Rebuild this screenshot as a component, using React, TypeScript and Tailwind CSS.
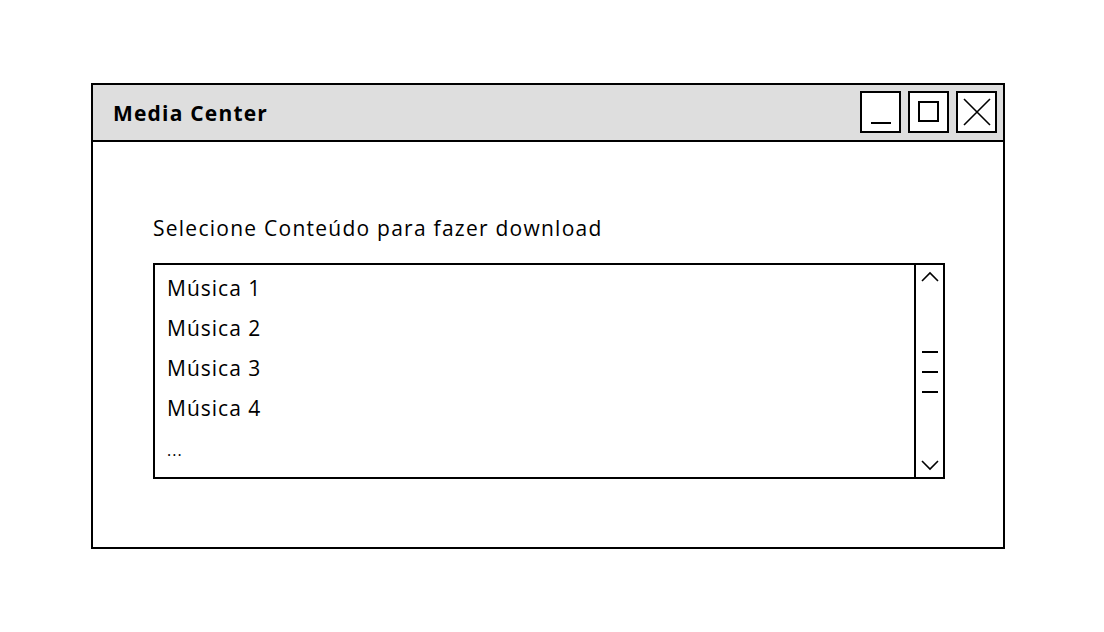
import React from "react";

const font = { fontFamily: '"Open Sans", "Noto Sans", sans-serif' };

export default function App() {
  const items = ["Música 1", "Música 2", "Música 3", "Música 4"];
  return (
    <div className="w-[1104px] h-[632px] bg-white relative" style={font}>
      <div className="pt-[83px] pl-[91px]">
        <div className="w-[914px] h-[466px] border-2 border-black flex flex-col bg-white">
          <div className="h-[57px] bg-[#dedede] border-b-2 border-black flex items-center justify-between pl-[20px] pr-[6px]">
            <span className="text-[21px] font-bold text-black tracking-[1.2px] mt-[2px]">Media Center</span>
            <div className="flex gap-[7px] mt-[-2px]">
              <div className="w-[41px] h-[42px] border-2 border-black bg-white flex items-end justify-center pb-[7px]">
                <div className="w-[20px] h-[2px] bg-black" />
              </div>
              <div className="w-[41px] h-[42px] border-2 border-black bg-white flex items-center justify-center">
                <div className="w-[21px] h-[21px] border-2 border-black" />
              </div>
              <div className="w-[41px] h-[42px] border-2 border-black bg-white flex items-center justify-center">
                <svg width="30" height="30" viewBox="0 0 30 30">
                  <path d="M2 2 L28 28 M28 2 L2 28" stroke="black" strokeWidth="1.6" fill="none" />
                </svg>
              </div>
            </div>
          </div>
          <div className="pl-[60px] pt-[72px]">
            <div className="text-[21px] text-black leading-[28px] tracking-[1.25px]">Selecione Conteúdo para fazer download</div>
            <div className="mt-[21px] w-[792px] h-[216px] border-2 border-black flex">
              <div className="flex-1 pl-[12px] pt-[8px]">
                {items.map((t) => (
                  <div key={t} className="h-[40px] text-[21px] leading-[30px] text-black tracking-[1px]">{t}</div>
                ))}
                <div className="text-[16px] leading-[20px] text-black mt-[7px] tracking-[1px]">...</div>
              </div>
              <div className="w-[29px] border-l-2 border-black flex flex-col items-center justify-between py-[6px]">
                <svg width="18" height="12" viewBox="0 0 18 12">
                  <path d="M1 10 L9 2 L17 10" stroke="black" strokeWidth="1.6" fill="none" />
                </svg>
                <div className="flex flex-col gap-[18px] mt-[68px]">
                  <div className="w-[16px] h-[2px] bg-black" />
                  <div className="w-[16px] h-[2px] bg-black" />
                  <div className="w-[16px] h-[2px] bg-black" />
                </div>
                <div className="flex-1" />
                <svg width="18" height="12" viewBox="0 0 18 12">
                  <path d="M1 2 L9 10 L17 2" stroke="black" strokeWidth="1.6" fill="none" />
                </svg>
              </div>
            </div>
          </div>
        </div>
      </div>
    </div>
  );
}
